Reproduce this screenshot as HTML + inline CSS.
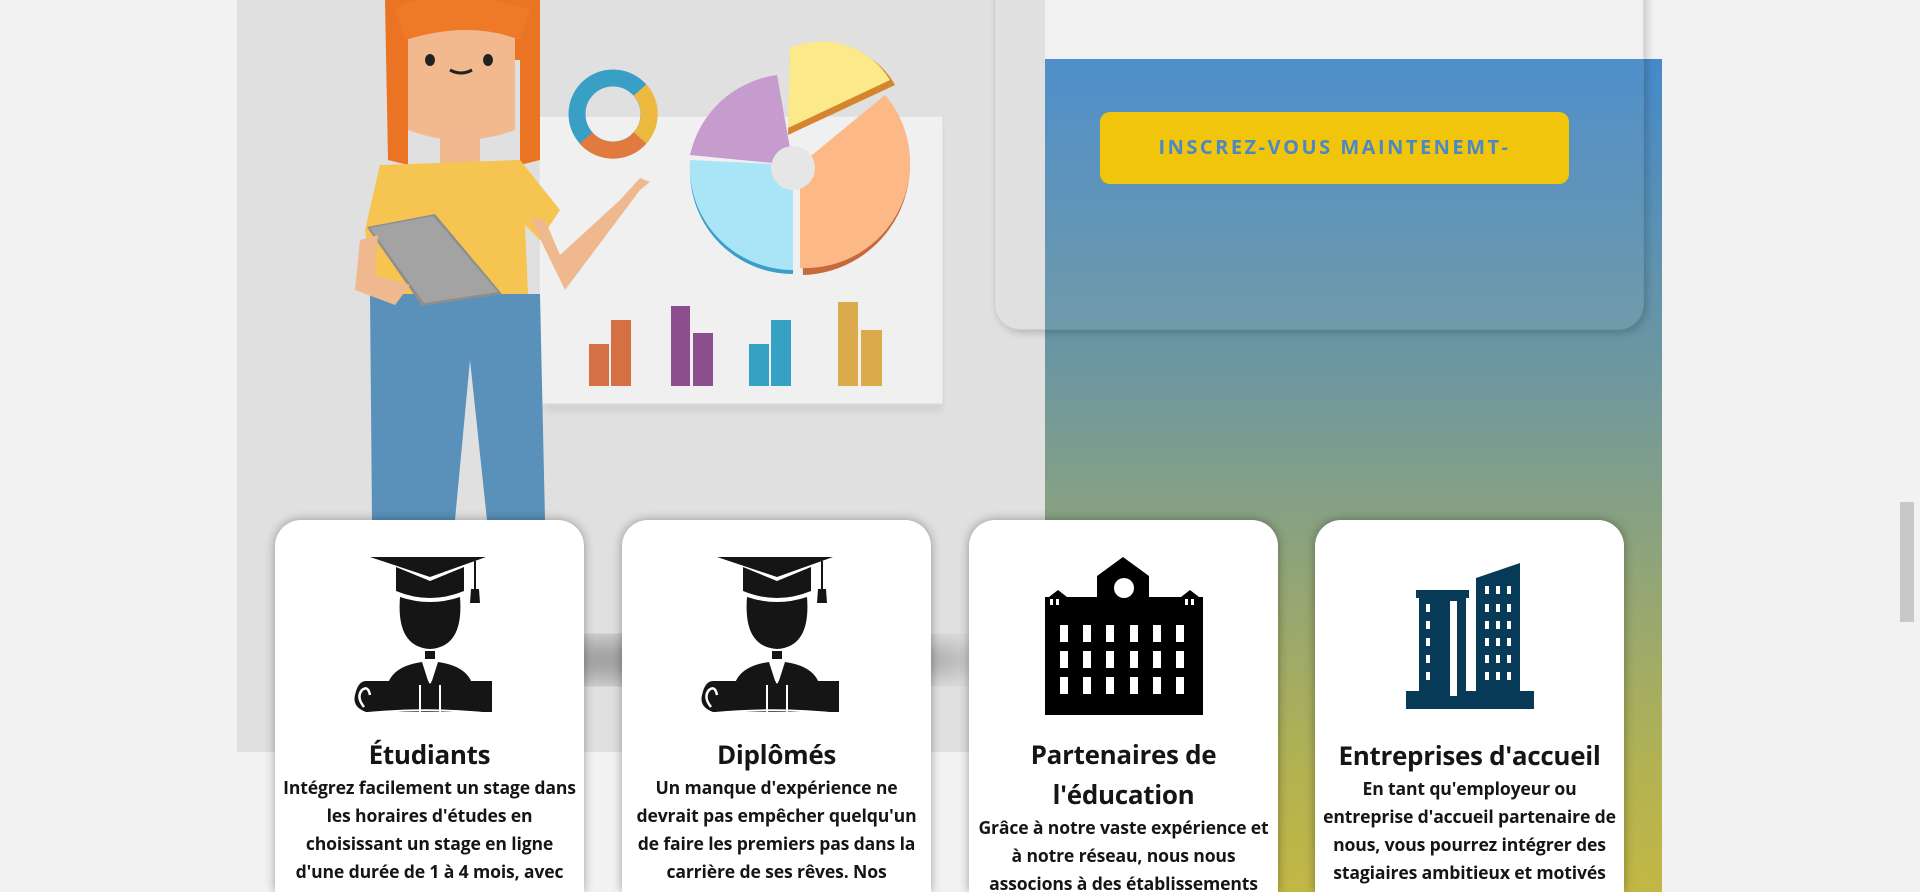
<!DOCTYPE html>
<html><head><meta charset="utf-8"><style>
*{margin:0;padding:0;box-sizing:border-box}
html,body{width:1920px;height:892px;overflow:hidden;background:#f2f2f2;font-family:"Open Sans","Liberation Sans",sans-serif;position:relative}
.abs{position:absolute}
.gray{left:237px;top:0;width:808px;height:752px;background:#e0e0e0}
.grad{left:1045px;top:59px;width:617px;height:833px;background:linear-gradient(#468ac9 0%,#6a96a3 35%,#8fa47a 60%,#b2b252 85%,#c3b745 100%)}
.topcard{left:994px;top:-40px;width:650px;height:370px;border-radius:0 0 26px 26px;background:rgba(242,242,242,0.06);border:1px solid rgba(120,120,120,0.18);box-shadow:3px 3px 8px rgba(0,0,0,0.18)}
.topcardfill{left:994px;top:-40px;width:51px;height:370px;background:#e0e0e0;border-radius:0 0 0 26px}
.btn{left:1100px;top:112px;width:469px;height:72px;background:#f0c50c;border-radius:10px;color:#4a88c8;font-weight:bold;font-size:20px;letter-spacing:2.5px;text-align:center;line-height:70px}
.card{top:520px;width:309px;height:372px;background:#fff;border-radius:26px 26px 0 0;box-shadow:0 0 10px rgba(0,0,0,0.35);text-align:center;color:#151515;overflow:hidden}
.card svg{display:block;margin:37px auto 0}
.card h3{font-size:26px;font-weight:bold;line-height:40px;margin-top:19px;letter-spacing:-0.3px}
.card p{font-size:17.6px;font-weight:bold;line-height:28px;padding:0 3px;letter-spacing:-0.15px}
.sb{left:1900px;top:502px;width:14px;height:120px;background:#c8c8c8}
</style></head><body>
<div class="abs gray"></div>
<div class="abs grad"></div>
<div class="abs topcardfill"></div>
<div class="abs topcard"></div>
<div class="abs btn">INSCREZ-VOUS MAINTENEMT-</div>
<div class="abs sb"></div>

<svg class="abs" style="left:0;top:0" width="1100" height="760" viewBox="0 0 1100 760">
<defs><filter id="bl"><feGaussianBlur stdDeviation="14"/></filter><filter id="bl2"><feGaussianBlur stdDeviation="3"/></filter></defs>
<ellipse cx="720" cy="660" rx="260" ry="22" fill="#9a9a9a" filter="url(#bl)"/>
<rect x="545" y="124" width="398" height="288" fill="#000" opacity=".05" filter="url(#bl2)"/>
<rect x="539" y="116" width="404" height="288" fill="#f0f0f0" stroke="#dadada"/>
<circle cx="613" cy="114" r="36" fill="none" stroke="#3a9fc4" stroke-width="17"/>
<path d="M640 90 A36 36 0 0 1 640 138" fill="none" stroke="#ecb83e" stroke-width="17"/>
<path d="M640 138 A36 36 0 0 1 586 138" fill="none" stroke="#e07a3e" stroke-width="17"/>
<g>
<path d="M793 171 L793 274 A103 103 0 0 1 690 171 Z" fill="#3a9ec8"/>
<path d="M793 165 L793 270 A103 103 0 0 1 690 160 Z" fill="#a9e5f7"/>
<path d="M793 165 L690 155 A103 103 0 0 1 777 75 Z" fill="#c59ccd"/>
<path d="M800 172 L890 102 A110 110 0 0 1 803 275 Z" fill="#c7693c"/>
<path d="M800 165 L885 95 A105 105 0 0 1 800 268 Z" fill="#fcb886"/>
<path d="M788 135 L790 52 A80 80 0 0 1 895 85 Z" fill="#d6852f"/>
<path d="M788 128 L790 48 A80 80 0 0 1 890 80 Z" fill="#fce98a"/>
<circle cx="793" cy="168" r="22" fill="#e6e6e6"/>
</g>
<rect x="589" y="344" width="20" height="42" fill="#d57045"/><rect x="611" y="320" width="20" height="66" fill="#d57045"/>
<rect x="671" y="306" width="19" height="80" fill="#8d4e8e"/><rect x="693" y="333" width="20" height="53" fill="#8d4e8e"/>
<rect x="749" y="344" width="20" height="42" fill="#36a1c2"/><rect x="771" y="320" width="20" height="66" fill="#36a1c2"/>
<rect x="838" y="302" width="20" height="84" fill="#dbaa4a"/><rect x="861" y="330" width="21" height="56" fill="#dbaa4a"/>
<path d="M370 294 L540 294 L545 520 L487 520 L470 360 L455 520 L372 520 Z" fill="#5a91bb"/>
<path d="M385 0 L540 0 L540 160 L520 165 L520 60 L408 60 L408 165 L388 160 Z" fill="#ea7424"/>
<path d="M408 20 Q460 -10 515 20 L515 130 Q460 150 408 130 Z" fill="#f2b98f"/>
<ellipse cx="430" cy="60" rx="5" ry="6" fill="#222"/><ellipse cx="488" cy="60" rx="5" ry="6" fill="#222"/>
<path d="M450 70 Q461 76 472 70" stroke="#222" stroke-width="3" fill="none"/>
<path d="M395 10 Q440 -20 530 10 L520 40 Q470 20 405 40 Z" fill="#ee7a28"/>
<path d="M440 135 L480 135 L480 165 L440 165 Z" fill="#f0b88f"/>
<path d="M380 165 L520 160 L560 210 L540 240 L525 225 L528 294 L375 294 L365 230 Z" fill="#f5c451"/>
<path d="M530 218 L565 290 L640 190 L650 182 L640 178 L620 200 L560 255 L545 220 Z" fill="#f0b88f"/>
<path d="M367 227 L435 214 L502 294 L422 306 Z" fill="#8e8e8e"/>
<path d="M370 228 L433 216 L498 292 L424 303 Z" fill="#a3a3a3"/>
<path d="M360 240 L355 290 L395 305 L410 285 L375 275 L378 235 Z" fill="#f0b88f"/>
</svg>

<div class="abs card" style="left:275px">
<svg width="156" height="158" viewBox="0 0 156 158"><g fill="#151515">
<path d="M18 0 H134 L78 20 Z"/><path d="M44 10 L78 24 L112 10 V34 Q78 48 44 34 Z"/>
<path d="M48 40 Q78 50 108 40 Q112 90 78 92 Q44 90 48 40 Z"/>
<rect x="122" y="4" width="2" height="30"/><path d="M119 32 H127 L128 46 H118 Z"/>
<path d="M73 94 H83 V102 H73 Z"/><path d="M70 105 L78 130 L86 105 Q122 110 122 138 H34 Q34 110 70 105 Z"/>
<path d="M14 124 H140 V155 H14 Q0 150 3 138 Q6 124 14 124 Z"/>
</g><path d="M73 104 L78 126 L83 104" fill="none" stroke="#fff" stroke-width="2"/>
<path d="M12 150 Q4 140 10 133 Q16 128 18 138" fill="none" stroke="#fff" stroke-width="2.5"/>
<path d="M16 156 Q80 150 140 157 M68 128 V156 M88 128 V156" stroke="#fff" stroke-width="2" fill="none"/></svg>
<h3>Étudiants</h3>
<p style="padding:0 5px">Intégrez facilement un stage dans les horaires d'études en choisissant un stage en ligne d'une durée de 1 à 4 mois, avec</p>
</div>

<div class="abs card" style="left:622px">
<svg width="156" height="158" viewBox="0 0 156 158"><g fill="#151515">
<path d="M18 0 H134 L78 20 Z"/><path d="M44 10 L78 24 L112 10 V34 Q78 48 44 34 Z"/>
<path d="M48 40 Q78 50 108 40 Q112 90 78 92 Q44 90 48 40 Z"/>
<rect x="122" y="4" width="2" height="30"/><path d="M119 32 H127 L128 46 H118 Z"/>
<path d="M73 94 H83 V102 H73 Z"/><path d="M70 105 L78 130 L86 105 Q122 110 122 138 H34 Q34 110 70 105 Z"/>
<path d="M14 124 H140 V155 H14 Q0 150 3 138 Q6 124 14 124 Z"/>
</g><path d="M73 104 L78 126 L83 104" fill="none" stroke="#fff" stroke-width="2"/>
<path d="M12 150 Q4 140 10 133 Q16 128 18 138" fill="none" stroke="#fff" stroke-width="2.5"/>
<path d="M16 156 Q80 150 140 157 M68 128 V156 M88 128 V156" stroke="#fff" stroke-width="2" fill="none"/></svg>
<h3>Diplômés</h3>
<p>Un manque d'expérience ne devrait pas empêcher quelqu'un de faire les premiers pas dans la carrière de ses rêves. Nos</p>
</div>

<div class="abs card" style="left:969px">
<svg width="158" height="158" viewBox="0 0 158 158"><g fill="#000">
<path d="M52 19 L78 0 L104 19 V40 H128 V158 H0 V40 H52 Z"/>
<path d="M4 40 L13 33 L22 40 Z"/><rect x="1" y="40" width="22" height="10"/>
<path d="M136 40 L145 33 L154 40 Z"/><rect x="133" y="40" width="23" height="10"/>
<rect x="104" y="40" width="54" height="118"/>
</g><circle cx="79" cy="31" r="10" fill="#fff"/>
<g fill="#fff">
<rect x="15" y="68" width="8" height="17"/><rect x="38" y="68" width="8" height="17"/><rect x="61" y="68" width="8" height="17"/><rect x="85" y="68" width="8" height="17"/><rect x="108" y="68" width="8" height="17"/><rect x="131" y="68" width="8" height="17"/>
<rect x="15" y="94" width="8" height="17"/><rect x="38" y="94" width="8" height="17"/><rect x="61" y="94" width="8" height="17"/><rect x="85" y="94" width="8" height="17"/><rect x="108" y="94" width="8" height="17"/><rect x="131" y="94" width="8" height="17"/>
<rect x="15" y="120" width="8" height="17"/><rect x="38" y="120" width="8" height="17"/><rect x="61" y="120" width="8" height="17"/><rect x="85" y="120" width="8" height="17"/><rect x="108" y="120" width="8" height="17"/><rect x="131" y="120" width="8" height="17"/>
<rect x="5" y="42" width="3" height="6"/><rect x="11" y="42" width="3" height="6"/><rect x="140" y="42" width="3" height="6"/><rect x="146" y="42" width="3" height="6"/>
</g></svg>
<h3>Partenaires de l'éducation</h3>
<p>Grâce à notre vaste expérience et à notre réseau, nous nous associons à des établissements</p>
</div>

<div class="abs card" style="left:1315px">
<svg width="128" height="148" viewBox="0 0 128 148" style="margin-top:43px"><g fill="#073a57">
<rect x="10" y="27" width="53" height="8"/><rect x="13" y="33" width="47" height="100"/>
<path d="M70 15 L114 0 V133 H70 Z"/><rect x="0" y="128" width="128" height="18"/>
</g><g fill="#fff">
<rect x="20" y="41" width="4" height="8"/><rect x="20" y="58" width="4" height="8"/><rect x="20" y="75" width="4" height="8"/><rect x="20" y="92" width="4" height="8"/><rect x="20" y="109" width="4" height="8"/>
<rect x="44" y="38" width="7" height="95"/>
<rect x="79" y="23" width="4" height="8"/><rect x="90" y="23" width="4" height="8"/><rect x="101" y="23" width="4" height="8"/>
<rect x="79" y="41" width="4" height="8"/><rect x="90" y="41" width="4" height="8"/><rect x="101" y="41" width="4" height="8"/>
<rect x="79" y="58" width="4" height="8"/><rect x="90" y="58" width="4" height="8"/><rect x="101" y="58" width="4" height="8"/>
<rect x="79" y="75" width="4" height="8"/><rect x="90" y="75" width="4" height="8"/><rect x="101" y="75" width="4" height="8"/>
<rect x="79" y="92" width="4" height="8"/><rect x="90" y="92" width="4" height="8"/><rect x="101" y="92" width="4" height="8"/>
<rect x="79" y="109" width="4" height="8"/><rect x="90" y="109" width="4" height="8"/><rect x="101" y="109" width="4" height="8"/>
</g></svg>
<h3 style="margin-top:24px">Entreprises d'accueil</h3>
<p>En tant qu'employeur ou entreprise d'accueil partenaire de nous, vous pourrez intégrer des stagiaires ambitieux et motivés</p>
</div>
</body></html>
